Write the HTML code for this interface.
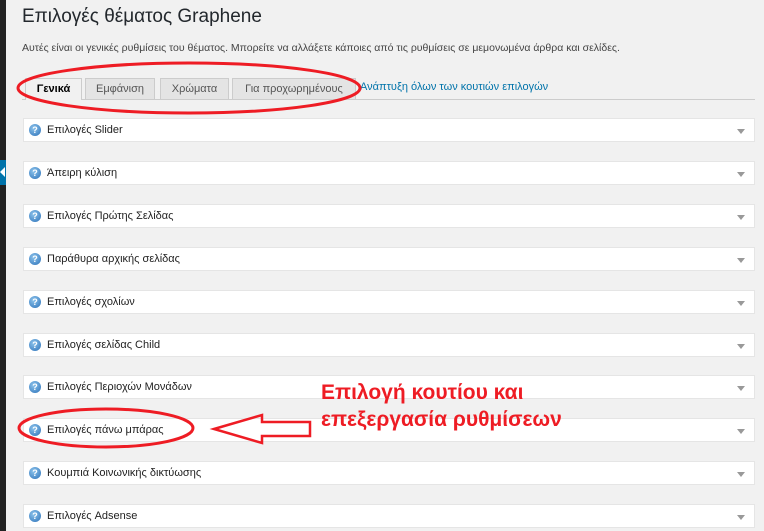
<!DOCTYPE html>
<html><head><meta charset="utf-8"><style>
body{margin:0;width:764px;height:531px;overflow:hidden;background:#f1f1f1;font-family:"Liberation Sans","DejaVu Sans",sans-serif;position:relative}
.strip{position:absolute;left:0;top:0;width:6px;height:531px;background:#222}
.blue{position:absolute;left:0;top:160px;width:6px;height:25px;background:#0073aa}
.blue:after{content:"";position:absolute;left:0;top:7px;border:5px solid transparent;border-left-width:0;border-right:5px solid #fff}
h1{position:absolute;left:22px;top:6px;margin:0;font-weight:normal;font-size:19px;color:#23282d}
.desc{position:absolute;left:22px;top:42px;font-size:10.5px;color:#444}
.tabline{position:absolute;left:22px;right:9px;top:99px;border-top:1px solid #ccc}
.tab{position:absolute;top:78px;height:21px;line-height:21px;font-size:11px;color:#555;background:#e4e4e4;border:1px solid #ccc;border-bottom:none;text-align:center;box-sizing:border-box}
.tab.a{background:#f1f1f1;color:#000;height:22px;font-weight:bold}
.link{position:absolute;left:360px;top:81px;font-size:11px;color:#0073aa}
.box{position:absolute;left:23px;width:732px;height:24px;background:#fff;border:1px solid #e5e5e5;box-sizing:border-box}
.box span{position:absolute;left:23px;top:5px;font-size:11px;color:#222}
.box i{position:absolute;left:5px;top:5px;width:12px;height:12px;border-radius:50%;background:radial-gradient(circle at 40% 35%,#8ec4ec,#2a70b8);color:#fff;font-size:9px;font-style:normal;font-weight:bold;text-align:center;line-height:12px}
.box b{position:absolute;right:9px;top:10px;border:4px solid transparent;border-top:5px solid #999;border-bottom:0}
svg{position:absolute;left:0;top:0}
.red{position:absolute;left:321px;font-size:21px;font-weight:bold;color:#ee1c24}
</style></head><body>
<div class="strip"></div><div class="blue"></div>
<h1>Επιλογές θέματος Graphene</h1>
<div class="desc">Αυτές είναι οι γενικές ρυθμίσεις του θέματος. Μπορείτε να αλλάξετε κάποιες από τις ρυθμίσεις σε μεμονωμένα άρθρα και σελίδες.</div>
<div class="tabline"></div>
<div class="tab a" style="left:25px;width:57px">Γενικά</div>
<div class="tab" style="left:85px;width:70px">Εμφάνιση</div>
<div class="tab" style="left:160px;width:69px">Χρώματα</div>
<div class="tab" style="left:232px;width:124px">Για προχωρημένους</div>
<div class="link">Ανάπτυξη όλων των κουτιών επιλογών</div>
<div class="box" style="top:118px"><i>?</i><span>Επιλογές Slider</span><b></b></div>
<div class="box" style="top:161px"><i>?</i><span>Άπειρη κύλιση</span><b></b></div>
<div class="box" style="top:204px"><i>?</i><span>Επιλογές Πρώτης Σελίδας</span><b></b></div>
<div class="box" style="top:247px"><i>?</i><span>Παράθυρα αρχικής σελίδας</span><b></b></div>
<div class="box" style="top:290px"><i>?</i><span>Επιλογές σχολίων</span><b></b></div>
<div class="box" style="top:333px"><i>?</i><span>Επιλογές σελίδας Child</span><b></b></div>
<div class="box" style="top:375px"><i>?</i><span>Επιλογές Περιοχών Μονάδων</span><b></b></div>
<div class="box" style="top:418px"><i>?</i><span>Επιλογές πάνω μπάρας</span><b></b></div>
<div class="box" style="top:461px"><i>?</i><span>Κουμπιά Κοινωνικής δικτύωσης</span><b></b></div>
<div class="box" style="top:504px"><i>?</i><span>Επιλογές Adsense</span><b></b></div>
<div class="red" style="top:381px">Επιλογή κουτίου και</div>
<div class="red" style="top:408px">επεξεργασία ρυθμίσεων</div>
<svg width="764" height="531"><g fill="none" stroke="#ee1c24" stroke-width="3">
<ellipse cx="189" cy="88" rx="171" ry="25"/>
<ellipse cx="106" cy="428" rx="87" ry="19"/>
<path d="M214 429 L262 415 L262 422 L310 422 L310 436 L262 436 L262 443 Z" stroke-width="2.5"/>
</g></svg>
</body></html>
